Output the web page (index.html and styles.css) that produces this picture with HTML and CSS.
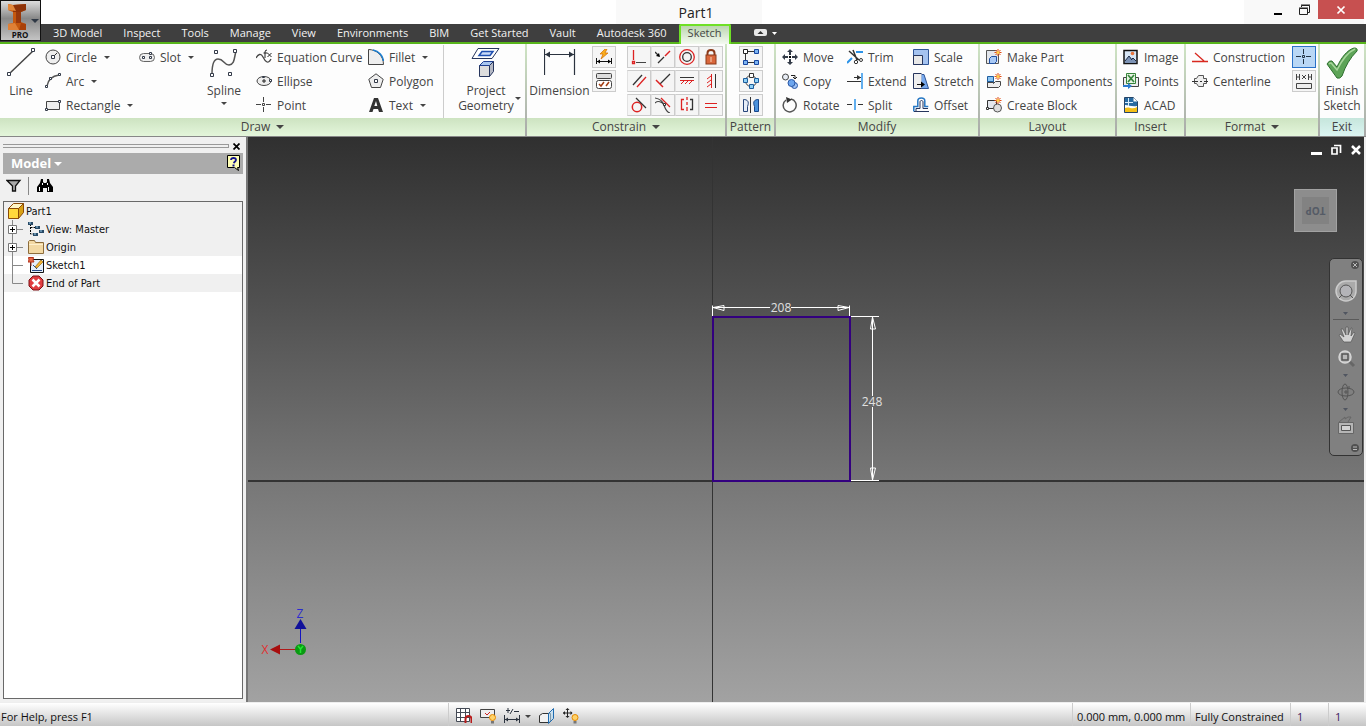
FILE: index.html
```html
<!DOCTYPE html>
<html lang="en">
<head>
  <meta charset="UTF-8">
  <meta name="viewport" content="width=device-width, initial-scale=1.0">
  <link rel="stylesheet" href="styles.css">
  <title>Part1</title>
</head>
<body>
  <header class="titlebar">
    <button class="app-button" aria-label="Application menu">
      <svg width="40" height="40" viewBox="0 0 40 40">
        <path d="M7 3l5 1 13-1v6l-5 2v10l5 2v6H7v-6l5-1V11L7 9z" fill="#c4580f"/>
        <path d="M12 4l13-1v6l-5 2h-8z" fill="#8e3208"/>
        <path d="M7 3l5 1 3 6-8-1z" fill="#e2873a"/>
        <path d="M15 11h5v11h-5z" fill="#97380c"/>
        <path d="M7 23l7-1 4 7H7z" fill="#df8035"/>
        <path d="M18 29l2-7 5 1v6z" fill="#a94008"/>
        <path d="M30 18h8l-4 4z" fill="#2f3845"/>
        <text x="19" y="37" text-anchor="middle" class="app-text">PRO</text>
      </svg>
    </button>
    <h1>Part1</h1>
    <div class="window-controls">
      <button aria-label="Minimize"><svg width="12" height="12"><path d="M2 9h8v2H2z"/></svg></button>
      <button aria-label="Restore"><svg width="12" height="12" fill="none" stroke="#222"><path d="M.5 4.500h8v6h-8zM2.500 3V1.500h8v7H9"/><path d="M0 4h9M2 1h9"/></svg></button>
      <button class="close" aria-label="Close"><svg width="10" height="10"><path d="M1.500 1.500l7 7M8.500 1.500l-7 7" stroke="#fff" stroke-width="1.700"/></svg></button>
    </div>
  </header>

  <nav class="tabs">
    <a href="#">3D Model</a>
    <a href="#">Inspect</a>
    <a href="#">Tools</a>
    <a href="#">Manage</a>
    <a href="#">View</a>
    <a href="#">Environments</a>
    <a href="#">BIM</a>
    <a href="#">Get Started</a>
    <a href="#">Vault</a>
    <a href="#">Autodesk 360</a>
    <a href="#" class="active">Sketch</a>
    <button class="collapse" aria-label="Minimize ribbon">
      <svg width="24" height="8"><rect width="13" height="7" rx="2" fill="#e8e8e8"/><path d="M3.500 5l3-3 3 3z" fill="#333"/><path d="M18 3h5l-2.500 3z" fill="#fff"/></svg>
    </button>
  </nav>

  <main class="ribbon">
    <section class="panel">
      <div class="panel-body draw">
        <button class="big">
          <svg width="32" height="32" viewBox="0 0 32 32"><path d="M4 27L28 4" stroke="#444" stroke-width="1.500"/><path d="M2.500 25.500h3v3h-3zM26.500 1.500h3v3h-3z" fill="#fff" stroke="#333a48"/></svg>
          <span>Line</span>
        </button>
        <div class="tools">
          <button class="tool arrow"><svg width="16" height="16"><circle cx="8" cy="8" r="7" fill="#eee" stroke="#444"/><path d="M8 8l4-4" stroke="#333"/><path d="M6.500 6.500h3v3h-3z" fill="#fff" stroke="#333a48"/></svg>Circle</button>
          <button class="tool arrow"><svg width="16" height="16"><path d="M2 13C3 7 7 3 14 2" fill="none" stroke="#555" stroke-width="1.500"/><path d="M.5 12.500h2v2h-2zM4.500 4.500h2v2h-2zM13.500.5h2v2h-2z" fill="#fff" stroke="#333a48"/></svg>Arc</button>
          <button class="tool arrow"><svg width="16" height="16"><path d="M1.500 4.500h13v8h-13z" fill="#eee" stroke="#444"/><path d="M.5 11.500h2v2h-2zM13.500 3.500h2v2h-2z" fill="#fff" stroke="#333a48"/></svg>Rectangle</button>
        </div>
        <div class="tools">
          <button class="tool arrow"><svg width="16" height="16"><rect x=".5" y="4.500" width="15" height="8" rx="4" fill="#eee" stroke="#666"/><path d="M3.500 7.500h2v2h-2zM10.500 7.500h2v2h-2zM10.500 3.500h2v2h-2z" fill="#fff" stroke="#333a48"/></svg>Slot</button>
        </div>
        <button class="big arrow">
          <svg width="32" height="32" viewBox="0 0 32 32"><path d="M4 27C4 18 6 12 10 12c6 0 6 6 11 6 6-1 5-7 7-14" fill="none" stroke="#555" stroke-width="1.500"/><path d="M2.500 26.500h3v3h-3zM6.500 3.500h3v3h-3zM20.500 25.500h3v3h-3zM25.500 2.500h3v3h-3z" fill="#fff" stroke="#333a48"/></svg>
          <span>Spline</span>
        </button>
        <div class="tools">
          <button class="tool"><svg width="16" height="16"><path d="M0 9c2-4 5-5 7-1s5 8 8 2" fill="none" stroke="#444" stroke-width="1.300"/><path d="M9 9V3q0-2 2-2M7.500 4h4M11.500 4l4 4M15.500 4l-4 4" fill="none" stroke="#222"/></svg>Equation Curve</button>
          <button class="tool"><svg width="16" height="16"><ellipse cx="8" cy="8" rx="7" ry="4.500" fill="#eee" stroke="#444"/><path d="M6 8h4M8 6v4" stroke="#222"/><path d="M13.500 6.500h2v2h-2zM6.500 3.500h2v1h-2z" fill="#fff" stroke="#333a48"/></svg>Ellipse</button>
          <button class="tool"><svg width="16" height="16"><path d="M0 7.500h5M10 7.500h5M7.500 0v5M7.500 10v5M6.500 6.500h2v2h-2z" fill="none" stroke="#444"/></svg>Point</button>
        </div>
        <div class="tools">
          <button class="tool arrow"><svg width="16" height="16"><path d="M.5 15.500V.5C8 .5 15.500 6 15.500 15.500z" fill="#eee" stroke="#444"/><path d="M5 1c6 1 10 6 10.500 11" fill="none" stroke="#1b7fd2" stroke-width="1.500"/></svg>Fillet</button>
          <button class="tool"><svg width="16" height="16"><path d="M8 .8l7.200 5.500-2.700 8.200h-9L.8 6.300z" fill="#eee" stroke="#444"/><path d="M6.500 6.500h3v3h-3z" fill="#fff" stroke="#333a48"/></svg>Polygon</button>
          <button class="tool arrow"><svg width="16" height="16"><path d="M1 15L6 1h4l5 14h-4l-1-3H5.500l-1 3zM6.300 9h3L8 4z" fill="#333"/></svg>Text</button>
        </div>
        <button class="big side-arrow divided">
          <svg width="32" height="32" viewBox="0 0 32 32"><path d="M8 1.500h21l-7 10H2z" fill="#fff" stroke="#26355d"/><path d="M12 4.500h11l-3 4H9z" fill="#c9daf8" stroke="#1f4fb0" stroke-width="1.500"/><path d="M9.500 18.500h10v11h-10z" fill="#ddd" stroke="#26355d"/><path d="M9.500 18.500l4-4h10l-4 4z" fill="#a8c6f0" stroke="#1f3f90"/><path d="M19.500 18.500l4-4v10l-4 5z" fill="#b4b8c4" stroke="#26355d"/></svg>
          <span>Project<br>Geometry</span>
        </button>
      </div>
      <button class="panel-label menu">Draw</button>
    </section>

    <section class="panel">
      <div class="panel-body constrain">
        <button class="big">
          <svg width="32" height="32" viewBox="0 0 32 32"><path d="M.5 2v26M30.500 2v26M1 7.500h29" stroke="#2b333f" fill="none" stroke-width="1.200"/><path d="M1 7.500l5-3v6zM30 7.500l-5-3v6z" fill="#2b333f"/></svg>
          <span>Dimension</span>
        </button>
        <div class="minis">
          <button class="mini" aria-label="Automatic dimensions"><svg width="16" height="16"><path d="M.5 9v6M15.500 9v6M1 12.500h14" stroke="#111"/><path d="M1 12.500l3-2v4zM15 12.500l-3-2v4z"/><path d="M9 0L4 5h3L5 10l7-6H9l2-4z" fill="#f9ae1c" stroke="#d36a00" stroke-width=".7"/></svg></button>
          <button class="mini" aria-label="Show constraints"><svg width="16" height="16"><rect x=".5" y=".5" width="15" height="5" rx="1" fill="#ddd" stroke="#444"/><rect x=".5" y="7.500" width="15" height="8" rx="2" fill="#fff" stroke="#444"/><path d="M3 11l2 2 3-4M10 13l3-4" stroke="#a33c12" stroke-width="1.500" fill="none"/></svg></button>
        </div>
        <div class="minis four">
          <button class="mini" aria-label="Coincident"><svg width="16" height="16"><path d="M2.500 1v10M1.500 12.500h2v2h-2z" stroke="#d22" fill="none" stroke-width="1.300"/><path d="M5 13.500h10" stroke="#444"/></svg></button>
          <button class="mini" aria-label="Collinear"><svg width="16" height="16"><path d="M0 3l4 4M3 14l6-6" stroke="#333" fill="none" stroke-width="1.300"/><path d="M5 8L1 7l3-3z"/><path d="M10 7l5-5" stroke="#d22" stroke-width="1.500"/></svg></button>
          <button class="mini" aria-label="Concentric"><svg width="16" height="16"><circle cx="8" cy="8" r="7.300" fill="none" stroke="#d22" stroke-width="1.300"/><circle cx="8" cy="8" r="4.300" fill="none" stroke="#333" stroke-width="1.300"/></svg></button>
          <button class="mini" aria-label="Fix"><svg width="16" height="16"><path d="M4.500 7V4q0-3 3.500-3t3.500 3v3" fill="none" stroke="#8b3a1a" stroke-width="2"/><rect x="3" y="6" width="10" height="9" fill="#d9673c" stroke="#8b3a1a"/><path d="M8 8v5" stroke="#f6d2b8"/></svg></button>
          <button class="mini" aria-label="Parallel"><svg width="16" height="16"><path d="M2 12L11 2" stroke="#333" stroke-width="1.300"/><path d="M6 14L15 4" stroke="#d22" stroke-width="1.300"/></svg></button>
          <button class="mini" aria-label="Perpendicular"><svg width="16" height="16"><path d="M5 11L15 1" stroke="#333" stroke-width="1.300"/><path d="M1 7l7 7" stroke="#d22" stroke-width="1.500"/></svg></button>
          <button class="mini" aria-label="Horizontal"><svg width="16" height="16"><path d="M1 4.500h14" stroke="#333"/><path d="M1 7.500h14M5 8l-3 3M9 8l-3 3M13 8l-3 3" stroke="#d22"/></svg></button>
          <button class="mini" aria-label="Vertical"><svg width="16" height="16"><path d="M12.500 1v14" stroke="#333"/><path d="M8.500 1v14M8 3L4 6M8 7l-4 3M8 11l-4 3" stroke="#d22"/></svg></button>
          <button class="mini" aria-label="Tangent"><svg width="16" height="16"><circle cx="6" cy="10" r="4.700" fill="none" stroke="#d22" stroke-width="1.500"/><path d="M5 1l10 10" stroke="#333" stroke-width="1.300"/></svg></button>
          <button class="mini" aria-label="Smooth"><svg width="16" height="16"><path d="M0 1c6 1 8 4 9 7s2 7 6 8M0 6c3-3 7-1 9 2" fill="none" stroke="#444" stroke-width="1.200"/><path d="M6 1l9 9" stroke="#d22" stroke-width="1.200"/><path d="M8.500 6.500h2v2h-2z" fill="#fff" stroke="#333"/></svg></button>
          <button class="mini" aria-label="Symmetric"><svg width="16" height="16"><path d="M5 2.500H2.500v10H5M8 0v3M8 5v3M8 10v4" stroke="#d22" fill="none" stroke-width="1.300"/><path d="M11 2.500h2.500v10H11" stroke="#333" fill="none" stroke-width="1.300"/></svg></button>
          <button class="mini" aria-label="Equal"><svg width="16" height="16"><path d="M2 6.500h12M2 10.500h12" stroke="#d22"/></svg></button>
        </div>
      </div>
      <button class="panel-label menu">Constrain</button>
    </section>

    <section class="panel">
      <div class="panel-body pattern">
        <div class="minis">
          <button class="mini" aria-label="Rectangular pattern"><svg width="16" height="16"><path d="M3 2.500h10M2.500 3v10.500h10" fill="none" stroke="#333"/><path d="M.5.5h4v4h-4z" fill="#fff" stroke="#222"/><path d="M11.500.5h4v4h-4zM11.500 11.500h4v4h-4zM.5 11.500h4v4h-4z" fill="#7db4f0" stroke="#1746a2"/></svg></button>
          <button class="mini" aria-label="Circular pattern"><svg width="16" height="16"><circle cx="8" cy="8" r="5.500" fill="none" stroke="#444"/><path d="M6.500.5h4v4h-4z" fill="#fff" stroke="#333"/><path d="M.5 5.500h4v4h-4zM11.500 5.500h4v4h-4zM6.500 11.500h4v4h-4z" fill="#8fd0f5" stroke="#1c5d9c"/></svg></button>
          <button class="mini" aria-label="Mirror"><svg width="16" height="16"><path d="M.5 2.500c4 0 6 2 4 7v5h-4z" fill="#e7eef8" stroke="#26457a"/><path d="M7.500 0v16" stroke="#333"/><path d="M15.500 2.500c-4 0-6 2-4 7v5h4z" fill="#4b92dc" stroke="#17468a"/></svg></button>
        </div>
      </div>
      <div class="panel-label">Pattern</div>
    </section>

    <section class="panel">
      <div class="panel-body modify">
        <div class="tools">
          <button class="tool"><svg width="16" height="16"><path d="M8 0l3 3H9v3H7V3H5zM8 16l3-3H9v-3H7v3H5zM0 8l3-3v2h3v2H3v2zM16 8l-3-3v2h-3v2h3v2z" fill="#333b48"/><path d="M7 7h2v2H7z"/></svg>Move</button>
          <button class="tool"><svg width="16" height="16"><circle cx="3.500" cy="4" r="3" fill="#e8edf5" stroke="#444"/><circle cx="12.500" cy="12.500" r="3" fill="#9fc3f4" stroke="#2a56a5"/><circle cx="9.500" cy="10" r="3.500" fill="#6da6ee" stroke="#2a56a5"/><path d="M9 2.500h4v3M11 4l2 2 2-2" fill="none" stroke="#222"/></svg>Copy</button>
          <button class="tool"><svg width="16" height="16"><path d="M9 2a6.500 6.500 0 1 1-5 1" fill="none" stroke="#555" stroke-width="1.500"/><path d="M4 0l6 2.500L5 6z" fill="#333"/></svg>Rotate</button>
        </div>
        <div class="tools">
          <button class="tool"><svg width="16" height="16"><path d="M0 14L5 9M9 3h7" stroke="#2c93e8" stroke-width="2"/><path d="M2 2l10 9M6 1l4 10" stroke="#333" stroke-width="1.500"/><circle cx="14" cy="11" r="1.500" fill="none" stroke="#333"/><circle cx="9" cy="13" r="1.700" fill="none" stroke="#333"/></svg>Trim</button>
          <button class="tool"><svg width="16" height="16"><path d="M0 8.500h14M7 4.500h7" stroke="#333"/><path d="M14 4.500l-4-2.500v5z" fill="#333"/><path d="M15 0v16" stroke="#2c93e8" stroke-width="1.500"/></svg>Extend</button>
          <button class="tool"><svg width="16" height="16"><path d="M0 7.500h5M11 7.500h5" stroke="#333"/><path d="M8 2v11" stroke="#2c93e8" stroke-width="1.500"/></svg>Split</button>
        </div>
        <div class="tools">
          <button class="tool"><svg width="16" height="16"><path d="M.5.5h15v15h-15z" fill="#a5c3f0" stroke="#2f5597"/><path d="M.5 6.500h9v9h-9z" fill="#e8e8e8" stroke="#26355d"/></svg>Scale</button>
          <button class="tool"><svg width="16" height="16"><path d="M8 1.500h3l4.500 14H8z" fill="#78a9ec" stroke="#2f5597"/><path d="M8.500 15.500h-8V.5h8" fill="#eee" stroke="#26355d"/><path d="M4 11.500h5" stroke="#111"/><path d="M12 11.500l-4-3v6z"/></svg>Stretch</button>
          <button class="tool"><svg width="16" height="16"><path d="M.8 14.500v-5h4V4c0-4 7-4 7 0v5.500h3.500" fill="none" stroke="#2778c4" stroke-width="1.500"/><path d="M3 14.500v-3h4V5c0-2 3-2 3 0v6.500h5M1 14.500h15" fill="none" stroke="#26355d"/></svg>Offset</button>
        </div>
      </div>
      <div class="panel-label">Modify</div>
    </section>

    <section class="panel">
      <div class="panel-body layout">
        <div class="tools">
          <button class="tool"><svg width="16" height="16"><path d="M.5 1.500h10l2 2v11h-12z" fill="#e3e6ec" stroke="#555"/><path d="M3.500 9.500l2-2h5v5l-2 2h-5z" fill="#a9c9f5" stroke="#1f4fa0"/><path d="M12 0v7M8.500 3.500h7M9.500 1l5 5M14.500 1l-5 5" stroke="#e04a12"/><circle cx="12" cy="3.500" r="1.500" fill="#ffd34d"/></svg>Make Part</button>
          <button class="tool"><svg width="16" height="16"><path d="M1.500 3.500h6v5h-6zM1.500 8.500h6v6h-6z" fill="#8cc5f2" stroke="#1f5d9f"/><path d="M7.500 10.500l2-2h5v4l-2 2h-11v-5h6z" fill="#eee" stroke="#444"/><path d="M12 0v7M8.500 3.500h7M9.500 1l5 5M14.500 1l-5 5" stroke="#e04a12"/><circle cx="12" cy="3.500" r="1.500" fill="#ffd34d"/></svg>Make Components</button>
          <button class="tool"><svg width="16" height="16"><path d="M1.500 3.500h9v8h-9z" fill="#e3e6ec" stroke="#333"/><path d="M.5 10.500h2v2h-2z" fill="#fff" stroke="#333"/><circle cx="11.500" cy="11" r="4" fill="#ddd" stroke="#555"/><path d="M12 0v7M8.500 3.500h7M9.500 1l5 5M14.500 1l-5 5" stroke="#e04a12"/><circle cx="12" cy="3.500" r="1.500" fill="#ffd34d"/></svg>Create Block</button>
        </div>
      </div>
      <div class="panel-label">Layout</div>
    </section>

    <section class="panel">
      <div class="panel-body insert">
        <div class="tools">
          <button class="tool"><svg width="16" height="16"><path d="M1 1.500h13v13H1z" fill="#d8e6f5" stroke="#111" stroke-width="1.500"/><path d="M2 12l4-5 3 3 1-1 3 3v2H2z" fill="#7d93b5"/><path d="M2 12l4-5 3 4M8 11l2-2 3 3" fill="none" stroke="#1c2a45"/><circle cx="9.500" cy="4.500" r="1.800" fill="#e8743c"/></svg>Image</button>
          <button class="tool"><svg width="16" height="16"><path d="M.5 4.500h15v9H.5z" fill="#eee" stroke="#444"/><path d="M3.500.5h9v10h-9z" fill="#e8f4e4" stroke="#36843a"/><path d="M5 2l6 7M11 2L5 9" stroke="#36843a" stroke-width="1.700"/><path d="M0 12h5v-2l4 3-4 3v-2H0z" fill="#2c7bd0"/></svg>Points</button>
          <button class="tool"><svg width="16" height="16"><path d="M1.500.5h9l4 4v11h-13z" fill="#286aa0" stroke="#264466"/><path d="M2 8c4 0 7 2 12 1v6H2z" fill="#fff"/><path d="M2 11c4-2 7 2 12-1v5H2z" fill="#f4bf16"/><path d="M5.500 1v8M2 5.500h8" stroke="#d9efff"/><path d="M10.500.5v4h4z" fill="#fff"/></svg>ACAD</button>
        </div>
      </div>
      <div class="panel-label">Insert</div>
    </section>

    <section class="panel">
      <div class="panel-body format">
        <div class="tools">
          <button class="tool"><svg width="16" height="16"><path d="M0 12.500h16M3 4l9 8" stroke="#d8281f" stroke-width="1.300"/></svg>Construction</button>
          <button class="tool"><svg width="16" height="16"><path d="M2.500 5.500h2l2-3h5v3h3v5h-3v3h-5l-2-3h-2z" fill="#eee" stroke="#555"/><path d="M0 8.500h6M8 8.500h2M12 8.500h4" stroke="#333"/></svg>Centerline</button>
        </div>
        <div class="minis">
          <button class="mini on" aria-label="Center point"><svg width="16" height="16"><path d="M0 7.500h5M10 7.500h5M7.500 0v5M7.500 10v5M6.500 6.500h2v2h-2z" fill="none" stroke="#234"/></svg></button>
          <button class="mini" aria-label="Driven dimension"><svg width="16" height="16"><path d="M.5 1v6M.5 4H3M3.500 1v6M15.500 1v6M15 4h-3M12.500 1v6M6 2l4 4M10 2L6 6" stroke="#444"/><path d="M.5 10.500h15v5H.5z" fill="#eee" stroke="#444"/></svg></button>
        </div>
      </div>
      <button class="panel-label menu">Format</button>
    </section>

    <section class="panel exit">
      <div class="panel-body">
        <button class="big">
          <svg width="32" height="32" viewBox="0 0 32 32"><path d="M1 17q2-4 5-3l5 6C15 11 21 3 28 1q4 0 3 3-10 10-15 25-2 3-5 2z" fill="#5da457" stroke="#2f7030"/><path d="M3 17q2-2 3 0l5 6C16 13 22 5 29 2" fill="none" stroke="#a8d69c" stroke-width="1.500"/></svg>
          <span>Finish<br>Sketch</span>
        </button>
      </div>
      <div class="panel-label">Exit</div>
    </section>
  </main>

  <div class="workspace">
    <aside class="browser">
      <div class="grip">
        <i></i>
        <button aria-label="Close browser"><svg width="7" height="7"><path d="M.5.5l6 6M6.500.5l-6 6" stroke="#000" stroke-width="1.700"/></svg></button>
      </div>
      <div class="browser-title">
        <button class="model">Model</button>
        <button aria-label="Help"><svg width="14" height="16"><path d="M.5.5h12v12h-2l1 3-4-3h-7z" fill="#ffffb5" stroke="#000"/><path d="M4 5q0-2 2.500-2T9 5q0 1-2.500 3" stroke="#11118c" stroke-width="1.800" fill="none"/><path d="M5.500 9.500h2v2h-2z" fill="#11118c"/></svg></button>
      </div>
      <div class="browser-tools">
        <button aria-label="Filter"><svg width="16" height="14"><path d="M1 1.500h13L9.500 7v5h-3V7z" fill="#aaa" stroke="#111" stroke-width="1.300"/></svg></button>
        <button aria-label="Find"><svg width="16" height="14"><path d="M4 0h2v3l1 1h2l1-1V0h2l1 4 3 4v5h-6V9H6v4H0V8l3-4z" fill="#000"/><path d="M2.500 8v4M11.500 8v4M5.500 4v2M10.500 4v2" stroke="#fff"/></svg></button>
      </div>
      <ul class="tree">
        <li><svg width="16" height="18"><path d="M.5 6.500h10v10H.5z" fill="#ffd83c" stroke="#8a4b08"/><path d="M.5 6.500l5-5h10l-5 5z" fill="#fff6c6" stroke="#8a4b08"/><path d="M10.500 6.500l5-5v9l-5 6z" fill="#d8a116" stroke="#8a4b08"/></svg>Part1</li>
        <li><svg class="branch" width="16" height="18"><path d="M4.500 0v18M9 9.500h6" stroke="#888"/><path d="M.5 5.500h8v8h-8z" fill="#fff" stroke="#777"/><path d="M2 9.500h5M4.500 7v5" stroke="#000"/></svg><svg width="16" height="16"><path d="M2.500 3v10H5M2.500 6.500H7" fill="none" stroke="#000" stroke-dasharray="2 1"/><path d="M0 1h5v3H0zM7 5h5v3H7zM11 9h5v3h-5zM5 12h5v3H5z" fill="#284a66"/><path d="M1 2h2M8 6h2M12 10h2M6 13h2" stroke="#9ed0ef"/></svg>View: Master</li>
        <li><svg class="branch" width="16" height="18"><path d="M4.500 0v18M9 9.500h6" stroke="#888"/><path d="M.5 5.500h8v8h-8z" fill="#fff" stroke="#777"/><path d="M2 9.500h5M4.500 7v5" stroke="#000"/></svg><svg width="16" height="16"><path d="M.5 14.500v-12l1-1h5l1 2h8v11z" fill="#f3d9a4" stroke="#8d6d3c"/><path d="M1 5.500h14" stroke="#fff0cd"/></svg>Origin</li>
        <li class="current"><svg class="branch" width="16" height="18"><path d="M4.500 0v18M5 9.500h10" stroke="#888"/></svg><svg width="16" height="16"><path d="M2.500 2.500h13v13h-13z" fill="#e5effa" stroke="#111"/><path d="M4 13.500h10M5 8l4 4" stroke="#284a85"/><path d="M7 10l6-7 2 2-6 6z" fill="#f4b52f" stroke="#805307" stroke-width=".6"/><path d="M.5.500h5L5 3l1 2H0l1-2zM3 5v4" fill="#e66a4c" stroke="#b4321a"/></svg>Sketch1</li>
        <li><svg class="branch" width="16" height="18"><path d="M4.500 0v9.500H15" fill="none" stroke="#888"/></svg><svg width="16" height="16"><path d="M5 1h6l4 4v6l-4 4H5l-4-4V5z" fill="#e03d40" stroke="#7c1015"/><path d="M4.500 4.500l7 7M11.500 4.500l-7 7" stroke="#fff" stroke-width="2.500"/></svg>End of Part</li>
      </ul>
    </aside>

    <div class="canvas">
      <i class="axis-x"></i>
      <i class="axis-y"></i>
      <svg class="sketch" width="180" height="190" viewBox="0 0 180 190">
        <g fill="none" stroke="#fff">
          <path d="M.5 27V15.500M137.500 27V15.500M1 17.500h57M79 17.500h58M139 26.500h28M139 190.500h28M160.500 27v79M160.500 117v73"/>
          <path d="M1 17.500l11-2v5zM137 17.500l-11-2v5zM160.500 27l-2 12h5zM160.500 190l-2-12h5z"/>
        </g>
        <path d="M1 27h137v164H1z" fill="none" stroke="#33007f" stroke-width="2"/>
        <text x="69" y="22" text-anchor="middle">208</text>
        <text x="160" y="116" text-anchor="middle">248</text>
      </svg>
      <svg class="triad" width="52" height="56" viewBox="0 0 52 56">
        <path d="M41.500 22v18" stroke="#1414c0"/><path d="M41.500 16l6 10h-12z" fill="#10109a"/>
        <path d="M20 46.500h16" stroke="#b01a1a"/><path d="M11 46.500l10-5v10z" fill="#a80e0e"/>
        <circle cx="41.500" cy="46.500" r="5.500" fill="#0a9a12"/><path d="M39 43l2.500 3 2.500-3M41.500 46v4" fill="none" stroke="#22e632" stroke-width="1.500"/>
        <text x="41" y="15" text-anchor="middle" fill="#2b2bd0">Z</text>
        <text x="6" y="51" text-anchor="middle" fill="#e03030">X</text>
      </svg>
      <div class="doc-controls">
        <button aria-label="Minimize document"><svg width="12" height="12"><path d="M1 8h11v3H1z" fill="#fff"/></svg></button>
        <button aria-label="Restore document"><svg width="12" height="12"><path d="M2 4h5v6H2zM4 1.500h6.500V9" fill="none" stroke="#fff" stroke-width="1.700"/></svg></button>
        <button aria-label="Close document"><svg width="12" height="12"><path d="M2 2l8 8M10 2l-8 8" stroke="#fff" stroke-width="2.500"/></svg></button>
      </div>
      <button class="viewcube"><span>TOP</span></button>
      <div class="navbar">
        <svg width="32" height="196" viewBox="0 0 32 196" fill="none">
          <circle cx="25" cy="6" r="4" fill="#505050"/><path d="M23 4l4 4M27 4l-4 4" stroke="#bbb"/>
          <path d="M16 22h10v10a10 10 0 1 1-10-10z" fill="#aaa" stroke="#ccc" stroke-width="1.500"/><circle cx="16" cy="32" r="6" fill="#b4b4b8" stroke="#555"/><path d="M9 39l3-3M23 39l-3-3" stroke="#555"/>
          <path d="M13 53h5l-2.500 3zM13 115h5l-2.500 3zM13 149h5l-2.500 3z" fill="#505560"/>
          <path d="M3 60.500h26" stroke="#5a5a5a"/>
          <path d="M13 82l-4-6 1-1 4 3-3-8h2l3 6V68h2v8l3-7h1l-1 8 3-4 1 1-4 9h-7z" fill="#d2d2d2" stroke="#555" stroke-width=".7"/>
          <circle cx="15" cy="98" r="6" fill="#b9b9b9" stroke="#d6d6d6" stroke-width="1.500"/><path d="M12 95h6v6h-6z" stroke="#555" stroke-width="1.500"/><path d="M20 103l4 4" stroke="#666" stroke-width="3"/>
          <ellipse cx="16" cy="133" rx="8" ry="4" stroke="#555"/><ellipse cx="15" cy="133" rx="3" ry="8" stroke="#555"/><path d="M14 133h4M16 131v4M19 127v3" stroke="#555"/>
          <path d="M8.500 163.500h15v11h-15z" fill="#b5b5b5" stroke="#666"/><path d="M11.500 166.500h9v5h-9z" fill="#d2d2d2" stroke="#555"/><path d="M9 163l6-5v2q3-3 6-2l-3 5" stroke="#666"/>
          <circle cx="25" cy="189" r="4" fill="#505050"/><path d="M23 188h4M23 190.500h4" stroke="#bbb"/>
        </svg>
      </div>
    </div>
  </div>

  <footer class="statusbar">
    <p class="help">For Help, press F1</p>
    <div class="status-icons">
      <button aria-label="Snap to grid"><svg width="16" height="16"><path d="M.5.5h13v13H.5zM4.500 0v14M9.500 0v14M0 4.500h14M0 9.500h14" fill="#fff" stroke="#444a55"/><path d="M9.500 15V11q0-3 3-3t3 3v4" fill="none" stroke="#b81b1b" stroke-width="2"/></svg></button>
      <button aria-label="Constraint options"><svg width="16" height="16"><path d="M.5 1.500h14v8H.5z" fill="#eee" stroke="#444"/><path d="M5 5l2 2 3-3" stroke="#c22" fill="none"/><circle cx="12.500" cy="9.500" r="3" fill="#ffd36a" stroke="#e68a00"/><path d="M11 13h3v2.500h-3z" fill="#777"/></svg></button>
      <button class="arrow" aria-label="Dimension display"><svg width="16" height="16"><path d="M.5 7v8M15.500 7v8M1 11.500h14M2 2.500h4M4 0v5M6 6l3-5M10 3.500h5" stroke="#2b333f"/><path d="M1 11.500l3-2v4zM15 11.500l-3-2v4z" fill="#2b333f"/></svg></button>
      <button aria-label="Slice graphics"><svg width="16" height="16"><path d="M.5 7.500l3-2h8v8l-2 1h-9z" fill="#f2f2f2" stroke="#333"/><path d="M9.500 5.500l5-5v10l-5 5z" fill="#b6dcf5" fill-opacity=".6" stroke="#1e6bb0"/></svg></button>
      <button aria-label="Relax mode"><svg width="16" height="16"><path d="M4.500 1v8M0 5h9" stroke="#222"/><path d="M4.500 0l2 2h-4zM4.500 10l2-2h-4zM0 5l2-2v4zM9.500 5l-2-2v4z" fill="#222"/><circle cx="12" cy="9.500" r="3" fill="#ffd36a" stroke="#e68a00"/><path d="M10.500 13h3v2.500h-3z" fill="#777"/></svg></button>
    </div>
    <p class="cell coords">0.000 mm, 0.000 mm</p>
    <p class="cell state">Fully Constrained</p>
    <p class="cell count">1</p>
    <p class="cell count">1</p>
  </footer>
</body>
</html>
```
FILE: styles.css
```css
* {
  box-sizing: border-box;
}

body {
  margin: 0;
  min-height: 100vh;
  display: flex;
  flex-direction: column;
  background-color: #f0f0f0;
  color: #444;
  font-family: "Open Sans", "Noto Sans", sans-serif;
  font-size: 12px;
}

button {
  margin: 0;
  padding: 0;
  border: none;
  background: none;
  color: inherit;
  font: inherit;
  cursor: pointer;
}

svg {
  display: block;
  flex: none;
}

p, h1, ul {
  margin: 0;
  padding: 0;
}

/* title bar */
.titlebar {
  position: relative;
  height: 24px;
  background-color: #fff;
  display: flex;
  justify-content: center;
}

.titlebar h1 {
  width: 146px;
  margin-left: 12px;
  padding-left: 14px;
  background-color: #f9f9f9;
  color: #222;
  font-size: 14px;
  font-weight: normal;
  line-height: 25px;
  text-align: center;
}

.app-button {
  position: absolute;
  left: 0;
  top: 0;
  width: 41px;
  height: 41px;
  border: 1px solid #111;
  background: linear-gradient(#ddd, #888 45%, #c4c4c4);
  z-index: 1;
}

.app-text {
  font-size: 8px;
  font-weight: bold;
  fill: #111;
}

.window-controls {
  position: absolute;
  right: 2px;
  top: 0;
  height: 24px;
  padding-left: 20px;
  display: flex;
  background-color: #f9f9f9;
}

.window-controls button {
  width: 27px;
  height: 19px;
  display: flex;
  align-items: center;
  justify-content: center;
}

.window-controls .close {
  width: 46px;
  background-color: #c75050;
}

/* tabs */
.tabs {
  height: 20px;
  padding-left: 53px;
  display: flex;
  gap: 21px;
  background-color: #3f3f3f;
  border-bottom: 2px solid #58b51c;
}

.tabs a {
  color: #f2f2f2;
  font-size: 11px;
  line-height: 18px;
  text-decoration: none;
  white-space: nowrap;
}

.tabs .active {
  height: 20px;
  margin-left: -9px;
  padding: 0 7px;
  border: 2px solid #6fe026;
  border-bottom: none;
  border-radius: 2px 2px 0 0;
  background: linear-gradient(#bcd6b1, #f4faf1);
  color: #444;
  line-height: 14px;
}

.collapse {
  margin-left: 2px;
}

/* ribbon */
.ribbon {
  display: grid;
  grid-template-columns: 527fr 200fr 49fr 204fr 137fr 69fr 134fr 46fr;
  border-bottom: 1px solid #888;
}

.panel {
  min-width: 0;
  display: flex;
  flex-direction: column;
  border-right: 2px solid;
  border-image: linear-gradient(#cfe6c4, #a8a8a8) 1;
  background-color: #fdfdfd;
}

.panel-body {
  height: 74px;
  padding-top: 1px;
  display: flex;
}

.panel-label {
  height: 18px;
  background: linear-gradient(#cde3c1, #e4f6db);
  color: #444;
  line-height: 18px;
  text-align: center;
}

.menu::after {
  content: "";
  display: inline-block;
  margin-left: 6px;
  border: 4px solid transparent;
  border-top-color: #444;
  border-bottom: none;
  vertical-align: 2px;
}

.exit .panel-label {
  background: linear-gradient(#c6e6dc, #dcf5f2);
}

.tools {
  display: grid;
  grid-template-rows: repeat(3, 24px);
  justify-items: start;
}

.tool {
  display: flex;
  align-items: center;
  gap: 5px;
  white-space: nowrap;
}

.tool.arrow::after,
.status-icons .arrow::after {
  content: "";
  margin-left: 2px;
  border: 3px solid transparent;
  border-top-color: #444;
  border-bottom: none;
}

.big {
  position: relative;
  display: flex;
  flex-direction: column;
  align-items: center;
  gap: 4px;
  padding-top: 2px;
  line-height: 15px;
}

.big.arrow::after {
  content: "";
  border: 3px solid transparent;
  border-top-color: #444;
  border-bottom: none;
}

.side-arrow::after {
  content: "";
  position: absolute;
  right: 4px;
  bottom: 18px;
  border: 3px solid transparent;
  border-top-color: #444;
  border-bottom: none;
}

.divided {
  border-left: 1px solid #ccc;
}

.draw {
  display: grid;
  grid-template-columns: 45px 94px 65px 52px 112px 75px 82px;
}

.draw .big {
  justify-self: start;
}

.draw .big:first-child {
  width: 42px;
}

.draw .big.arrow {
  width: 40px;
}

.draw .divided {
  width: 82px;
  padding-left: 3px;
}

.minis {
  display: grid;
  grid-template-rows: repeat(3, 22px);
  grid-auto-columns: 24px;
  gap: 2px 0;
  padding-top: 1px;
}

.minis.four {
  grid-template-columns: repeat(4, 24px);
  margin-left: 11px;
}

.mini {
  width: 24px;
  height: 22px;
  display: flex;
  align-items: center;
  justify-content: center;
  border: 1px solid #ccc;
  background-color: #f5f5f5;
}

.four .mini + .mini {
  border-left-color: #e2e2e2;
}

.mini.on {
  border-color: #2a72c8;
  background-color: #b9d7f5;
}

.constrain .big {
  width: 65px;
}

.pattern {
  justify-content: center;
}

.modify {
  display: grid;
  grid-template-columns: 65px 66px 1fr;
  padding-left: 6px;
}

.layout,
.insert,
.format {
  padding-left: 6px;
}

.format {
  justify-content: space-between;
  padding-right: 2px;
}

.exit .big {
  width: 100%;
}

/* browser panel */
.workspace {
  flex: 1;
  display: flex;
}

.browser {
  width: 248px;
  padding: 2px 3px 3px;
  display: flex;
  flex-direction: column;
  border-right: 2px solid #777;
  background-color: #f0f0f0;
  color: #111;
}

.grip {
  height: 14px;
  display: flex;
  align-items: center;
  gap: 4px;
}

.grip i {
  flex: 1;
  height: 4px;
  border: 1px solid #999;
  border-left: none;
}

.grip button {
  width: 10px;
}

.browser-title {
  height: 21px;
  padding: 0 2px 1px 8px;
  display: flex;
  align-items: center;
  justify-content: space-between;
  background-color: #ababab;
}

.model {
  color: #fff;
  font-size: 13px;
  font-weight: bold;
}

.model::after {
  content: "";
  display: inline-block;
  margin-left: 3px;
  border: 4px solid transparent;
  border-top-color: #fff;
  border-bottom: none;
  vertical-align: 2px;
}

.browser-tools {
  height: 27px;
  padding: 2px 3px 6px;
  display: flex;
  align-items: center;
}

.browser-tools button + button {
  margin-left: 6px;
  padding: 2px 8px;
  border-left: 1px solid #888;
}

.tree {
  flex: 1;
  border: 1px solid #696969;
  background-color: #fff;
  list-style: none;
  font-family: "DejaVu Sans Condensed", "Open Sans", sans-serif;
  font-size: 11px;
}

.tree li {
  height: 18px;
  padding-left: 4px;
  display: flex;
  align-items: center;
  gap: 2px;
  background-color: #f0f0f0;
}

.tree .current {
  background-color: #fff;
}

.branch {
  margin-right: 2px;
}

/* drawing area */
.canvas {
  position: relative;
  flex: 1;
  min-height: 480px;
  margin-right: 2px;
  overflow: hidden;
  background: linear-gradient(#303030, #505050 29%, #777 61%, #a2a2a2);
}

.axis-x,
.axis-y {
  position: absolute;
  background-color: #333;
}

.axis-x {
  left: 0;
  right: 0;
  top: 343px;
  height: 2px;
}

.axis-y {
  left: 464px;
  top: 0;
  bottom: 0;
  width: 1px;
}

.sketch {
  position: absolute;
  left: 464px;
  top: 153px;
  overflow: visible;
  fill: #e0e0e0;
  font-size: 12px;
}

.triad {
  position: absolute;
  left: 11px;
  bottom: 43px;
  font-size: 12px;
}

.doc-controls {
  position: absolute;
  right: 2px;
  top: 7px;
  display: flex;
  gap: 8px;
}

.viewcube {
  position: absolute;
  right: 27px;
  top: 52px;
  width: 43px;
  height: 43px;
  padding: 7px;
  border: 1px solid #a2a2a2;
  background-color: #8d8d8d;
}

.viewcube span {
  display: block;
  background-color: #828282;
  color: #555b66;
  font-size: 10px;
  font-weight: bold;
  line-height: 27px;
  transform: rotate(180deg);
}

.navbar {
  position: absolute;
  right: 1px;
  top: 121px;
  border: 1px solid #333;
  border-radius: 5px;
  background-color: #808080;
}

/* status bar */
.statusbar {
  height: 24px;
  display: flex;
  align-items: stretch;
  border-top: 1px solid #eee;
  background: linear-gradient(#fff, #c6c6c6);
  color: #111;
  font-size: 11px;
  line-height: 27px;
  white-space: nowrap;
}

.help {
  width: 449px;
  padding-left: 1px;
  border-right: 1px solid #ccc;
}

.status-icons {
  flex: 1;
  padding: 5px 7px 0;
  display: flex;
  align-items: flex-start;
  gap: 8px;
}

.status-icons button {
  display: flex;
  align-items: center;
}

.status-icons .arrow::after {
  margin-left: 5px;
}

.cell {
  padding-left: 4px;
  border-left: 1px solid #ccc;
}

.coords {
  width: 118px;
}

.state {
  width: 100px;
}

.count {
  width: 38px;
  padding-left: 6px;
  color: #402060;
}
```
